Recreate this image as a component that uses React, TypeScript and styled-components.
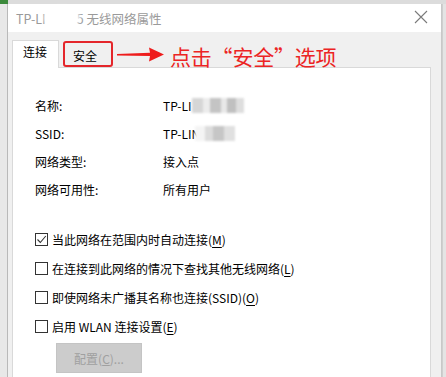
import React from "react";
import styled, { createGlobalStyle } from "styled-components";

const GlobalStyle = createGlobalStyle`
    html, body {
        margin: 0;
        padding: 0;
        width: 446px;
        height: 377px;
        overflow: hidden;
        background: #e8e8e8;
    }
    body {
        font-family: "Noto Sans CJK SC", "Microsoft YaHei", sans-serif;
        font-size: 12px;
        color: #000;
    }
`

const infoRows = [
    { label: '名称:', value: 'TP-LI', blur: 'wide' },
    { label: 'SSID:', value: 'TP-LIN', blur: 'narrow' },
    { label: '网络类型:', value: '接入点', blur: '' },
    { label: '网络可用性:', value: '所有用户', blur: '' },
]

const options = [
    { text: '当此网络在范围内时自动连接(', key: 'M', checked: true },
    { text: '在连接到此网络的情况下查找其他无线网络(', key: 'L', checked: false },
    { text: '即使网络未广播其名称也连接(SSID)(', key: 'O', checked: false },
    { text: '启用 WLAN 连接设置(', key: 'E', checked: false },
]

export default function App() {
    return (
        <Page>
            <GlobalStyle />
            <TopStrip>
                <GreenMark />
            </TopStrip>
            <Desk>
                <Window>
                    <TitleBar>
                        <Title>
                            TP-LI<TitleBlur />5 无线网络属性
                        </Title>
                        <CloseIcon width="14" height="14" viewBox="0 0 14 14">
                            <path d="M1 1 L13 13 M13 1 L1 13" stroke="#7a7a7a" strokeWidth="1.1" fill="none" />
                        </CloseIcon>
                    </TitleBar>

                    <Body>
                        <TabRow>
                            <Tab active>连接</Tab>
                            <Tab highlighted>安全</Tab>
                            <Note>
                                <svg width="48" height="16" viewBox="0 0 48 16">
                                    <path d="M0 7 L33 5.8 L32 0.5 L47 7.5 L32 14.5 L33 9 L0 8.6 Z" fill="#ee1c1c" />
                                </svg>
                                <NoteText>点击“安全”选项</NoteText>
                            </Note>
                        </TabRow>

                        <Panel>
                            <InfoList>
                                {infoRows.map((row) => (
                                    <InfoRow key={row.label}>
                                        <InfoLabel>{row.label}</InfoLabel>
                                        <InfoValue>
                                            {row.value}
                                            {row.blur && <Mosaic size={row.blur} />}
                                        </InfoValue>
                                    </InfoRow>
                                ))}
                            </InfoList>

                            <OptionList>
                                {options.map((opt) => (
                                    <Option key={opt.key}>
                                        <CheckBox>
                                            {opt.checked && (
                                                <svg width="11" height="11" viewBox="0 0 11 11">
                                                    <path d="M1.5 5.5 L4.3 8.5 L9.8 2" stroke="#333" strokeWidth="1.1" fill="none" />
                                                </svg>
                                            )}
                                        </CheckBox>
                                        <span>
                                            {opt.text}<u>{opt.key}</u>)
                                        </span>
                                    </Option>
                                ))}
                            </OptionList>

                            <ConfigButton disabled>
                                配置(<u>C</u>)...
                            </ConfigButton>
                        </Panel>
                    </Body>
                </Window>
                <ScrollEdge />
            </Desk>
        </Page>
    )
}

const Page = styled.div`
    width: 446px;
    height: 377px;
    display: flex;
    flex-direction: column;
    background: #e8e8e8;
    overflow: hidden;
`

const TopStrip = styled.div`
    height: 4px;
    flex-shrink: 0;
    background: #dcdcdc;
    display: flex;
`

const GreenMark = styled.div`
    width: 8px;
    height: 4px;
    background: #3c8a3c;
`

const Desk = styled.div`
    flex: 1;
    display: flex;
    padding-left: 7px;
    min-height: 0;
`

const Window = styled.div`
    flex: 1;
    display: flex;
    flex-direction: column;
    background: #f0f0f0;
    border-left: 1px solid #b9b9b9;
    border-right: 1px solid #c8c8c8;
`

const TitleBar = styled.div`
    height: 28px;
    flex-shrink: 0;
    background: #fff;
    display: flex;
    align-items: center;
    justify-content: space-between;
    padding: 0 13px 0 8px;
`

const Title = styled.div`
    font-size: 12.5px;
    color: #9a9a9a;
    display: flex;
    align-items: center;
    white-space: nowrap;
`

const TitleBlur = styled.span`
    display: inline-block;
    width: 36px;
    height: 22px;
    margin: 0 -3px 0 -2px;
    background: #fff;
    border-radius: 50%;
    filter: blur(2px);
    position: relative;
    z-index: 1;
`

const CloseIcon = styled.svg`
    display: block;
    margin-top: -2px;
`

const Body = styled.div`
    flex: 1;
    display: flex;
    flex-direction: column;
    padding: 8px 10px 0 4px;
    min-height: 0;
`

const TabRow = styled.div`
    display: flex;
    align-items: flex-end;
    height: 28px;
    flex-shrink: 0;
    position: relative;
    z-index: 1;
    margin-bottom: -1px;
`

const Tab = styled.div<{ active?: boolean; highlighted?: boolean }>`
    box-sizing: border-box;
    height: ${props => props.active ? '28px' : '26px'};
    padding: ${props => props.active ? '3px 10px 0 10px' : '5px 0 0 8px'};
    width: ${props => props.active ? '47px' : '50px'};
    margin-left: ${props => props.highlighted ? '4px' : '0'};
    background: ${props => props.active ? '#fff' : 'transparent'};
    border: ${props => props.highlighted ? '2px solid #e4262b' : '1px solid #d9d9d9'};
    border-bottom: ${props => props.active ? 'none' : props.highlighted ? '2px solid #e4262b' : '1px solid #d9d9d9'};
    border-radius: ${props => props.highlighted ? '3px' : '0'};
    line-height: 16px;
    font-size: 12px;
    align-self: ${props => props.highlighted ? 'flex-start' : 'flex-end'};
    margin-top: ${props => props.highlighted ? '1px' : '0'};
`

const Note = styled.div`
    display: flex;
    align-items: center;
    align-self: flex-start;
    margin-left: 4px;
    gap: 5px;
`

const NoteText = styled.span`
    font-size: 21px;
    line-height: 26px;
    color: #ec2424;
    margin-top: 3px;
    letter-spacing: -0.2px;
`

const Panel = styled.div`
    flex: 1;
    background: #fff;
    border: 1px solid #d9d9d9;
    border-bottom: none;
    padding: 23px 0 0 22px;
    display: flex;
    flex-direction: column;
`

const InfoList = styled.div`
    display: flex;
    flex-direction: column;
`

const InfoRow = styled.div`
    display: flex;
    align-items: center;
    height: 28px;
`

const InfoLabel = styled.div`
    width: 128px;
`

const InfoValue = styled.div`
    display: flex;
    align-items: center;
`

const Mosaic = styled.span<{ size: string }>`
    display: inline-block;
    height: 15px;
    width: ${props => props.size === 'wide' ? '52px' : '40px'};
    margin-left: ${props => props.size === 'wide' ? '0' : '-5px'};
    background: ${props => props.size === 'wide'
        ? 'linear-gradient(90deg, #d6d6d6 0 22%, #ececec 22% 35%, #c4c4c4 35% 55%, #e8e8e8 55% 68%, #c0c0c0 68% 85%, #dedede 85% 100%)'
        : 'linear-gradient(90deg, #f4f4f4 0 25%, #dcdcdc 25% 45%, #c6c6c6 45% 72%, #e0e0e0 72% 100%)'};
    filter: blur(0.8px);
`

const OptionList = styled.div`
    display: flex;
    flex-direction: column;
    margin-top: 22px;
`

const Option = styled.div`
    display: flex;
    align-items: center;
    height: 29px;
    gap: 4px;

    u {
        text-underline-offset: 2px;
    }
`

const CheckBox = styled.span`
    box-sizing: border-box;
    width: 13px;
    height: 13px;
    border: 1px solid #333;
    display: flex;
    align-items: center;
    justify-content: center;
    background: #fff;
    flex-shrink: 0;
`

const ConfigButton = styled.button`
    width: 86px;
    height: 30px;
    margin: 2px 0 0 21px;
    background: #cccccc;
    border: 1px solid #c4c4c4;
    color: #a0a0a0;
    font-family: "Noto Sans CJK SC", "Microsoft YaHei", sans-serif;
    font-size: 12px;
    padding: 0;
`

const ScrollEdge = styled.div`
    width: 3px;
    background: #e4e4e4;
    border-left: 1px solid #cfcfcf;
`
